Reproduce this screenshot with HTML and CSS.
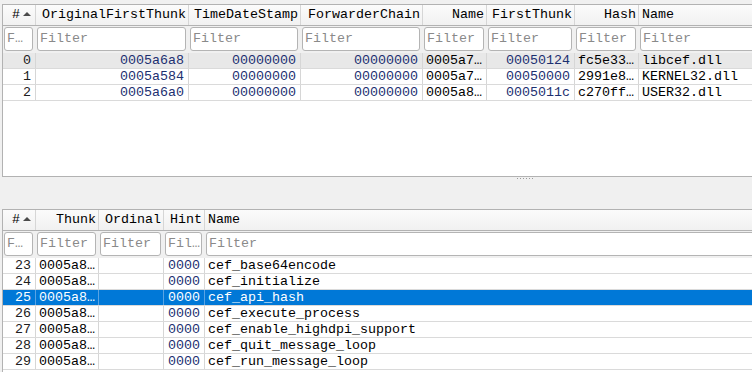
FILE: index.html
```html
<!DOCTYPE html>
<html>
<head>
<meta charset="utf-8">
<link rel="stylesheet" href="styles.css">
</head>
<body>
<div class="app">
  <div class="frame top-frame">
    <div class="row head cols-top">
      <div class="hc idx">#<span class="arrow"></span></div>
      <div class="hc r">OriginalFirstThunk</div>
      <div class="hc r">TimeDateStamp</div>
      <div class="hc r">ForwarderChain</div>
      <div class="hc r">Name</div>
      <div class="hc r">FirstThunk</div>
      <div class="hc r">Hash</div>
      <div class="hc l last">Name</div>
    </div>
    <div class="row filters cols-top">
      <div class="fc"><div class="inp tiny">Filter</div></div>
      <div class="fc"><div class="inp">Filter</div></div>
      <div class="fc"><div class="inp">Filter</div></div>
      <div class="fc"><div class="inp">Filter</div></div>
      <div class="fc"><div class="inp">Filter</div></div>
      <div class="fc"><div class="inp">Filter</div></div>
      <div class="fc"><div class="inp">Filter</div></div>
      <div class="fc"><div class="inp">Filter</div></div>
    </div>
    <div class="row data cols-top current">
      <div class="c r n">0</div>
      <div class="c r h">0005a6a8</div>
      <div class="c r h">00000000</div>
      <div class="c r h">00000000</div>
      <div class="c l">0005a7b4</div>
      <div class="c r h">00050124</div>
      <div class="c l">fc5e33a1</div>
      <div class="c l last">libcef.dll</div>
    </div>
    <div class="row data cols-top">
      <div class="c r n">1</div>
      <div class="c r h">0005a584</div>
      <div class="c r h">00000000</div>
      <div class="c r h">00000000</div>
      <div class="c l">0005a7c2</div>
      <div class="c r h">00050000</div>
      <div class="c l">2991e8b7</div>
      <div class="c l last">KERNEL32.dll</div>
    </div>
    <div class="row data cols-top">
      <div class="c r n">2</div>
      <div class="c r h">0005a6a0</div>
      <div class="c r h">00000000</div>
      <div class="c r h">00000000</div>
      <div class="c l">0005a8d0</div>
      <div class="c r h">0005011c</div>
      <div class="c l">c270ff42</div>
      <div class="c l last">USER32.dll</div>
    </div>
  </div>
  <div class="splitter">
    <div class="grip"><i></i><i></i><i></i><i></i><i></i><i></i></div>
  </div>
  <div class="frame bottom-frame">
    <div class="row head cols-bot">
      <div class="hc idx">#<span class="arrow"></span></div>
      <div class="hc r">Thunk</div>
      <div class="hc r">Ordinal</div>
      <div class="hc r">Hint</div>
      <div class="hc l last">Name</div>
    </div>
    <div class="row filters cols-bot">
      <div class="fc"><div class="inp tiny">Filter</div></div>
      <div class="fc"><div class="inp">Filter</div></div>
      <div class="fc"><div class="inp">Filter</div></div>
      <div class="fc"><div class="inp">Filter</div></div>
      <div class="fc"><div class="inp">Filter</div></div>
    </div>
    <div class="row data cols-bot">
      <div class="c r n">23</div><div class="c l">0005a8e2</div><div class="c r"></div><div class="c r h">0000</div><div class="c l last">cef_base64encode</div>
    </div>
    <div class="row data cols-bot">
      <div class="c r n">24</div><div class="c l">0005a8f6</div><div class="c r"></div><div class="c r h">0000</div><div class="c l last">cef_initialize</div>
    </div>
    <div class="row data cols-bot selected">
      <div class="c r n">25</div><div class="c l">0005a8a8</div><div class="c r"></div><div class="c r h">0000</div><div class="c l last">cef_api_hash</div>
    </div>
    <div class="row data cols-bot">
      <div class="c r n">26</div><div class="c l">0005a8b8</div><div class="c r"></div><div class="c r h">0000</div><div class="c l last">cef_execute_process</div>
    </div>
    <div class="row data cols-bot">
      <div class="c r n">27</div><div class="c l">0005a8ce</div><div class="c r"></div><div class="c r h">0000</div><div class="c l last">cef_enable_highdpi_support</div>
    </div>
    <div class="row data cols-bot">
      <div class="c r n">28</div><div class="c l">0005a8ec</div><div class="c r"></div><div class="c r h">0000</div><div class="c l last">cef_quit_message_loop</div>
    </div>
    <div class="row data cols-bot">
      <div class="c r n">29</div><div class="c l">0005a804</div><div class="c r"></div><div class="c r h">0000</div><div class="c l last">cef_run_message_loop</div>
    </div>
  </div>
</div>
</body>
</html>
```
FILE: styles.css
```css
html, body {
  margin: 0;
  padding: 0;
  background: #f0f0f0;
  overflow: hidden;
}
body {
  width: 752px;
  height: 372px;
}
.app {
  padding: 4px 0 0 2px;
  width: 780px;
  font-family: "Liberation Mono", "DejaVu Sans Mono", monospace;
  font-size: 13.33px;
  color: #000;
}
.frame {
  border: 1px solid #b2b2b2;
  background: #fff;
  box-sizing: border-box;
}
.top-frame {
  height: 173px;
}
.bottom-frame {
  height: 200px;
}
.splitter {
  height: 32px;
  box-sizing: border-box;
  padding: 1px 0 0 515px;
}
.grip {
  display: flex;
  gap: 2px;
}
.grip i {
  display: block;
  width: 1px;
  height: 1px;
  background: #9a9a9a;
}
.row {
  display: grid;
}
.cols-top {
  grid-template-columns: 33px 153px 112px 122px 64px 88px 64px 1fr;
}
.cols-bot {
  grid-template-columns: 33px 63px 65px 41px 1fr;
}
.head {
  height: 21px;
  background: linear-gradient(#fbfbfb, #f1f1f1);
  border-bottom: 1px solid #b2b2b2;
  box-sizing: border-box;
}
.hc {
  box-sizing: border-box;
  border-right: 1px solid #d6d6d6;
  line-height: 20px;
  padding: 0 2px 0 3px;
  white-space: nowrap;
  overflow: hidden;
}
.hc.r { text-align: right; }
.hc.l { text-align: left; }
.hc.last { border-right: none; }
.hc.idx {
  display: flex;
  align-items: center;
  padding-left: 9px;
}
.arrow {
  display: block;
  width: 0;
  height: 0;
  margin-left: 3px;
  margin-top: -2px;
  border-left: 4px solid transparent;
  border-right: 4px solid transparent;
  border-bottom: 4px solid #4a4a4a;
}
.filters {
  height: 27px;
  background: #f0f0f0;
}
.fc {
  padding: 1px 3px 0 1px;
  box-sizing: border-box;
  min-width: 0;
}
.inp {
  height: 24px;
  box-sizing: border-box;
  border: 1px solid #b4b4b4;
  border-radius: 3px;
  background: #fff;
  color: #8a8a8a;
  line-height: 22px;
  padding: 0 1px 0 2px;
  white-space: nowrap;
  overflow: hidden;
  text-overflow: ellipsis;
}
.inp.tiny {
  padding-right: 3px;
}
.data {
  height: 16px;
  box-sizing: border-box;
  border-bottom: 1px solid #dadada;
}
.c {
  box-sizing: border-box;
  border-right: 1px solid #d6d6d6;
  line-height: 15px;
  padding: 0 3px 0 3px;
  white-space: nowrap;
  overflow: hidden;
  text-overflow: ellipsis;
  min-width: 0;
}
.c.r { text-align: right; padding-right: 4px; }
.c.l { text-align: left; padding-right: 1px; }
.c.last { border-right: none; }
.c.n { color: #202020; }
.c.h { color: #1c2f70; }
.current {
  background: #e8e8e8;
}
.selected {
  background: #0078d7;
}
.selected .c {
  color: #fff;
  border-right-color: #5aa4e4;
}
```
